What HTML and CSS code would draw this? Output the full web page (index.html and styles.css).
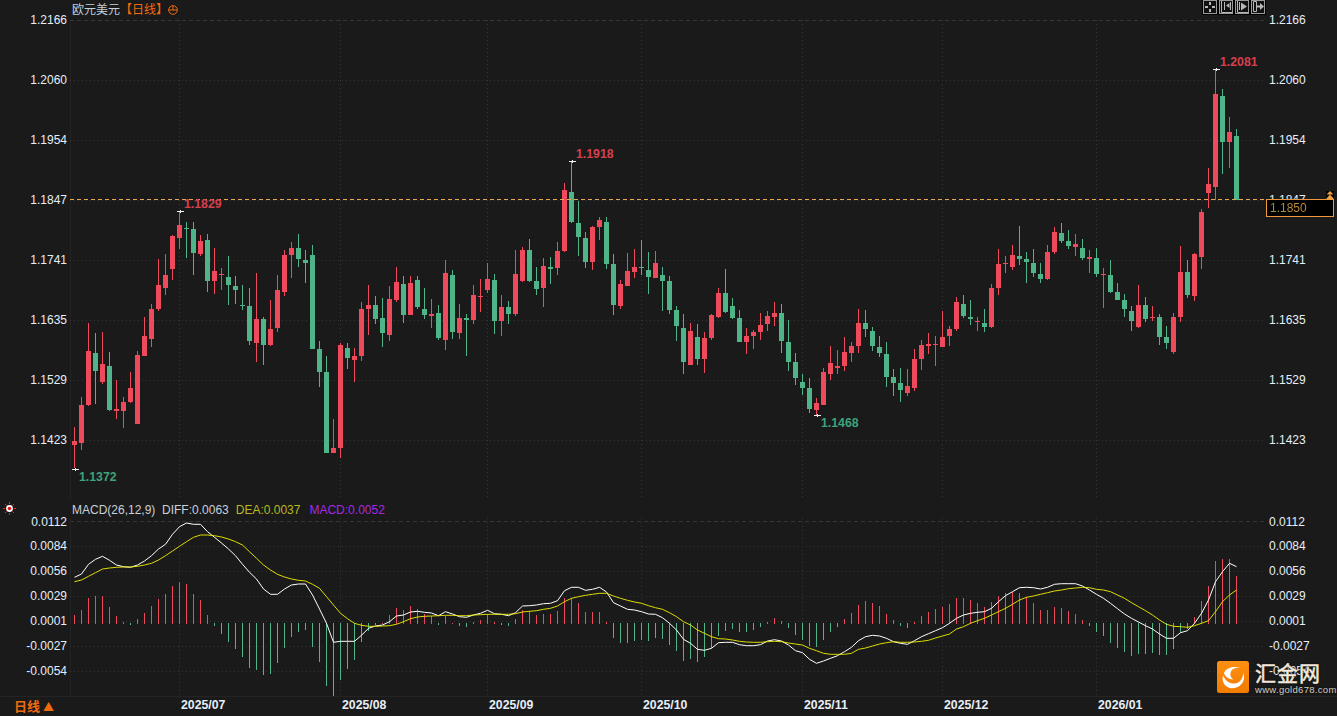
FILE: index.html
```html
<!DOCTYPE html>
<html lang="zh">
<head>
<meta charset="utf-8">
<title>欧元美元 日线</title>
<link rel="stylesheet" href="styles.css">
</head>
<body>
<main class="app">
  <section class="pane pane-price">
    <div class="axis axis-left axis-price">
      <span>1.2166</span><span>1.2060</span><span>1.1954</span><span>1.1847</span><span>1.1741</span><span>1.1635</span><span>1.1529</span><span>1.1423</span>
    </div>
    <div class="plot">
      <div class="title">欧元美元<span class="title-period">【日线】</span><svg class="title-icon" width="10" height="10" viewBox="0 0 10 10"><circle cx="5" cy="5" r="4.300" fill="none" stroke="#f06a10"/><path d="M.5 5h9M5 1v4" stroke="#f06a10" fill="none"/></svg></div>
      <svg id="price-chart" class="chart" width="1197" height="500" viewBox="70 0 1197 500"></svg>
    </div>
    <div class="axis axis-right axis-price">
      <span>1.2166</span><span>1.2060</span><span>1.1954</span><span>1.1847</span><span>1.1741</span><span>1.1635</span><span>1.1529</span><span>1.1423</span>
    </div>
  </section>

  <section class="pane pane-macd">
    <div class="axis axis-left axis-macd">
      <span>0.0112</span><span>0.0084</span><span>0.0056</span><span>0.0029</span><span>0.0001</span><span>-0.0027</span><span>-0.0054</span>
    </div>
    <div class="plot">
      <div class="legend">
        <span class="legend-diff">MACD(26,12,9)&nbsp; DIFF:0.0063</span>
        <span class="legend-dea">DEA:0.0037</span>
        <span class="legend-macd">MACD:0.0052</span>
      </div>
      <svg id="macd-chart" class="chart" width="1197" height="196" viewBox="70 500 1197 196"></svg>
    </div>
    <div class="axis axis-right axis-macd">
      <span>0.0112</span><span>0.0084</span><span>0.0056</span><span>0.0029</span><span>0.0001</span><span>-0.0027</span><span>-0.0054</span>
    </div>
  </section>

  <footer class="timebar">
    <div class="period">日线 <span class="period-arrow">▲</span></div>
    <svg id="time-axis" class="chart" width="1197" height="19" viewBox="70 697 1197 19"></svg>
  </footer>

  <svg class="indicator-dot" width="15" height="15" viewBox="0 0 15 15">
    <path d="M7.5 1v2M7.5 12v2M1 7.5h2M12 7.5h2M3 3l1.4 1.4M10.6 10.6 12 12M3 12l1.4-1.4M10.6 4.4 12 3" stroke="#ff2020" stroke-width="1"/>
    <circle cx="7.5" cy="7.5" r="3.4" fill="#fff"/>
    <circle cx="7.5" cy="7.5" r="1.8" fill="#e01818"/>
  </svg>

  <div class="toolbar">
    <button class="tool"><svg width="12" height="12" viewBox="0 0 12 12"><path d="M5 1h2v3H5zM5 8h2v3H5zM1 5h3v2H1zM8 5h3v2H8z" fill="#b8b8b8"/></svg></button>
    <button class="tool"><svg width="12" height="12" viewBox="0 0 12 12"><path d="M1.500 0v11.500H12M4.500 1v8M10.500 1v8" stroke="#b8b8b8" fill="none"/><path d="M9.500 2v5L6 4.500z" fill="#b8b8b8"/></svg></button>
    <button class="tool"><svg width="12" height="12" viewBox="0 0 12 12"><path d="M1.500 0v11.500H12M3.500 1v8" stroke="#b8b8b8" fill="none"/><path d="M5 1.500v8l6-4z" fill="#b8b8b8"/></svg></button>
    <button class="tool"><svg width="12" height="12" viewBox="0 0 12 12"><path d="M1.500.5h3v10h-3z" stroke="#b8b8b8" fill="none"/><path d="M5 4.500h3V2l4 3.500-4 3.500V6.500H5z" fill="#b8b8b8"/></svg></button>
  </div>

  <div class="price-tag"><span>1.1850</span></div>
  <svg class="price-arrows" width="8" height="8" viewBox="0 0 8 8"><path d="M4 0l3.500 3.500H.5zM4 3.500 8 8H0z" fill="#f0a040"/></svg>

  <div class="brand">
    <svg class="brand-mark" width="32" height="32" viewBox="0 0 32 32">
      <defs><linearGradient id="brand-fill" x1="0" y1="0" x2="0" y2="1"><stop offset="0" stop-color="#ff8f12"/><stop offset="1" stop-color="#f07c00"/></linearGradient></defs>
      <rect width="32" height="32" rx="2.500" fill="url(#brand-fill)"/>
      <path d="M6 14.500c-1.500 5 1 11 7 12.500 6.500 1.500 13-3 14-9.500.3-2-.2-4-.9-5.500.3 5-3.500 11-9.500 10.500C11 22 8 19 6 14.500z" fill="#fff"/>
      <path d="M7 12C9 7.500 15 4.500 24 7c-5-.6-8.500.5-10 3.500-1.500 3.300 0 6.500 2.500 8-5 0-8.500-3-9.500-6.500z" fill="#fff"/>
    </svg>
    <div class="brand-text">
      <span class="brand-name">汇金网</span>
      <span class="brand-url">www.gold678.com</span>
    </div>
  </div>
</main>
<script src="script.js"></script>
</body>
</html>
```
FILE: styles.css
```css
* {
  box-sizing: border-box;
}

html,
body {
  margin: 0;
  background: #1a1a1a;
}

.app {
  position: relative;
  width: 1337px;
  height: 716px;
  overflow: hidden;
  display: flex;
  flex-direction: column;
  background: #1a1a1a;
  color: #e6eef8;
  font-family: "Liberation Sans", Arial, sans-serif;
  font-size: 12px;
}

.pane {
  display: grid;
  grid-template-columns: 70px 1197px 70px;
}

.pane-price {
  height: 500px;
}

.pane-macd {
  height: 196px;
}

.plot {
  position: relative;
}

.chart {
  display: block;
}

.axis {
  display: flex;
  flex-direction: column;
  line-height: 15px;
  font-size: 12px;
  white-space: nowrap;
}

.axis-left {
  align-items: flex-end;
  padding-right: 3px;
}

.axis-right {
  align-items: flex-start;
  padding-left: 2px;
}

.axis-price {
  gap: 45px;
  padding-top: 13px;
}

.axis-macd {
  gap: 10px;
  padding-top: 14px;
}

.axis-macd span:first-child {
  margin-top: 1px;
  margin-bottom: -1px;
}

.title {
  position: absolute;
  left: 2px;
  top: 1px;
  display: flex;
  align-items: center;
  height: 15px;
  color: #c4d0dc;
  font-family: "Noto Sans CJK SC", "Liberation Sans", sans-serif;
  font-size: 12px;
  line-height: 15px;
}

.title-period {
  color: #f06a10;
}

.title-icon {
  margin-left: 0;
  margin-top: 2px;
}

.legend {
  position: absolute;
  left: 2px;
  top: 3px;
  display: flex;
  gap: 7px;
  line-height: 15px;
  white-space: nowrap;
}

.legend-diff {
  color: #c8d0da;
}

.legend-dea {
  color: #b8b820;
}

.legend-macd {
  margin-left: 2px;
  color: #a828e0;
}

.timebar {
  display: flex;
  height: 20px;
  border-top: 1px solid #242424;
}

.period {
  width: 70px;
  padding-left: 14px;
  color: #f06a10;
  font-family: "Noto Sans CJK SC", "Liberation Sans", sans-serif;
  font-size: 13px;
  font-weight: 700;
  line-height: 18px;
  white-space: nowrap;
}

.period-arrow {
  font-size: 11px;
}

.indicator-dot {
  position: absolute;
  left: 2px;
  top: 501px;
}

.toolbar {
  position: absolute;
  left: 1202px;
  top: -1px;
  display: flex;
  gap: 2px;
  padding: 1px;
  background: #000;
}

.tool {
  display: flex;
  align-items: center;
  justify-content: center;
  width: 14px;
  height: 14px;
  padding: 0;
  border: 1px solid #9a9a9a;
  background: #111;
}

.tool svg {
  display: block;
}

.price-tag {
  position: absolute;
  left: 1266px;
  top: 199px;
  width: 68px;
  height: 18px;
  padding-left: 3px;
  border: 1px solid #f0963c;
  background: #000;
  line-height: 17px;
}

.price-tag span {
  background: linear-gradient(90deg, #8d9440, #d88a30);
  -webkit-background-clip: text;
  background-clip: text;
  color: transparent;
}

.price-arrows {
  position: absolute;
  left: 1326px;
  top: 191px;
  background: #000;
}

.brand {
  position: absolute;
  left: 1217px;
  top: 661px;
  display: flex;
  gap: 6px;
}

.brand-mark {
  display: block;
}

.brand-text {
  display: flex;
  flex-direction: column;
  width: 66px;
  color: #f4e8dc;
  text-shadow: 0 0 2px #111, 0 0 2px #111;
}

.brand-name {
  font-family: "Noto Sans CJK SC", "Liberation Sans", sans-serif;
  font-size: 21px;
  font-weight: 400;
  -webkit-text-stroke: .5px #f4e8dc;
  letter-spacing: 1px;
  line-height: 23px;
}

.brand-url {
  font-size: 9.500px;
  letter-spacing: .3px;
  line-height: 9px;
  margin-top: 1px;
  white-space: nowrap;
  color: #d8ccc0;
}
```
FILE: script.js
```js
const NS = "http://www.w3.org/2000/svg";
const RED = "#ee4a5b";
const GREEN = "#4fb588";

function el(parent, name, attrs, text) {
  const node = document.createElementNS(NS, name);
  for (const key in attrs) node.setAttribute(key, attrs[key]);
  if (text) node.textContent = text;
  parent.appendChild(node);
  return node;
}

/* [colour, high, body top, body bottom, low] sampled per block, y = oy + v / 3 */
const candleBlocks = [
  { oy: 200, rows: [
    ["r",681,723,735,805],["r",591,615,729,750],["r",370,453,615,618],["g",400,459,513,612],["r",396,492,546,552],
    ["g",456,498,630,633],["r",540,627,633,657],["r",591,606,633,684],["r",516,564,606,609],["r",453,465,672,672],
    ["r",351,408,468,468],["r",312,327,417,441],["r",177,255,327,333],["r",162,225,264,285],["r",105,108,207,240],
    ["r",33,75,114,147],["g",66,84,88,174],["g",66,87,159,225],["r",105,123,162,168],["g",102,120,243,276],
    ["r",144,213,243,282],["r",204,222,226,270],["g",168,231,255,315],["g",228,258,270,312],["g",255,314,318,330],
    ["g",264,318,423,435],["r",219,357,429,486],["g",351,357,435,495],["r",300,387,435,438],["r",225,270,384,396],
    ["r",150,165,276,288],["r",126,144,165,234],["g",102,144,177,201],["g",150,180,189,249],["g",135,165,447,447],
    ["g",423,447,516,561],["g",468,516,759,759],["r",657,744,759,759],["r",429,435,744,774],["g",429,444,474,507],
    ["r",444,468,480,546]
  ]},
  { oy: 150, rows: [
    ["r",456,477,618,633],["r",405,465,477,555],["g",438,465,507,522],["g",444,504,549,591],["r",408,447,555,573],
    ["r",351,396,450,456],["g",378,402,495,519],["r",378,399,495,495],["g",378,390,471,477],["g",414,477,495,507],
    ["r",447,492,498,534],["g",465,489,564,570],["r",330,369,570,600],["g",360,375,546,567],["r",462,504,549,567],
    ["g",492,504,510,618],["r",405,435,510,522],["r",387,438,441,486],["r",339,387,420,429],["g",372,390,513,552],
    ["r",435,471,513,558],["g",453,471,492,522],["r",300,372,492,498],["r",291,300,393,396],["g",267,300,393,396],
    ["g",351,393,417,435],["r",324,348,414,471],["g",321,351,357,402],["r",276,303,354,375],["r",99,120,303,306],
    ["g",33,126,216,219],["g",153,219,261,318],["g",246,264,336,354],["r",228,231,336,360],["r",201,210,231,270],
    ["g",201,216,342,357],["g",312,342,465,495],["r",390,402,468,477],["r",309,363,408,408],["r",297,351,366,384],
    ["g",270,351,354,375],["g",306,360,381,432],["r",303,339,384,384]
  ]},
  { oy: 220, rows: [
    ["g",141,165,183,273],["g",168,183,270,282],["g",258,270,318,363],["g",282,324,426,462],["r",309,333,435,435],
    ["g",312,351,417,435],["r",336,354,417,459],["r",282,285,354,360],["r",204,219,291,294],["g",147,219,276,279],
    ["g",234,258,294,297],["g",270,294,366,366],["r",324,348,366,402],["r",330,336,348,387],["r",279,315,336,360],
    ["r",273,288,312,333],["r",246,279,291,318],["g",252,279,363,399],["g",300,366,426,453],["g",399,426,474,495],
    ["g",462,486,504,525],["g",474,504,567,579],["r",534,549,570,585],["r",444,456,555,555],["r",378,429,462,480],
    ["r",390,438,444,462],["r",351,396,438,453],["r",366,378,399,426],["r",267,309,378,399],["g",270,309,327,351],
    ["g",321,333,378,393],["g",348,381,399,411],["g",366,402,471,501],["g",447,471,489,528],["g",444,489,510,546],
    ["r",447,498,519,528],["r",387,417,504,513]
  ]},
  { oy: 190, rows: [
    ["r",450,465,507,540],["r",429,462,468,492],["r",438,462,465,528],["r",363,441,471,471],["r",408,417,438,468],
    ["r",321,336,417,423],["g",315,342,378,384],["g",330,381,387,405],["r",381,393,396,423],["g",357,399,411,426],
    ["r",282,294,411,414],["r",177,222,294,315],["r",198,219,222,249],["r",165,195,231,240],["g",108,198,207,225],
    ["g",186,207,216,279],["g",177,219,249,261],["g",219,252,267,279],["r",165,186,267,270],["r",111,126,186,192],
    ["g",99,129,153,159],["g",120,153,168,177],["r",132,162,171,198],["g",147,174,204,210],["r",180,201,207,249],
    ["g",174,204,252,261],["r",234,252,255,354],["g",210,255,306,309],["g",279,306,330,330],["g",312,330,357,381],
    ["g",348,363,393,423],["r",285,345,411,414],["g",321,345,387,396],["r",348,381,384,393],["g",372,381,441,465],
    ["g",408,441,459,477],["r",369,381,486,492]
  ]},
  { oy: 200, rows: [
    ["r",138,216,351,366],["g",180,216,285,294],["r",159,162,288,303],["r",27,36,171,207]
  ]},
  { oy: 0, rows: [
    ["r",504,552,579,624],["r",207,282,561,600],["g",267,288,426,522],["r",351,396,426,504],["g",387,408,600,600]
  ]}
];

const macdBlocks = [
  { oy: 515, base: 327,
    hist: [300,285,249,243,243,276,303,321,330,312,294,273,252,237,213,201,207,237,255,300,333,357,381,402,426,459,465,480,477,444,399,366,351,345,396,441,513,543,495,462,435,381,348,330,324,300,279],
    diff: [187,177,148,133,124,136,150,155,157,150,138,122,102,88,58,35,24,28,28,50,67,84,102,122,148,172,192,222,238,238,222,210,207,207,240,282,325,382,379,379,379,361,340,333,330,320,303],
    dea: [200,195,184,173,162,159,157,156,156,154,150,145,135,122,108,94,80,67,60,60,62,66,72,80,90,110,130,150,165,178,186,192,196,198,208,220,245,270,295,311,325,331,334,334,333,332,328] },
  { oy: 570, base: 162,
    hist: [120,108,117,132,138,165,138,159,168,171,156,150,132,156,165,168,147,120,123,135,132,132,123,84,84,99,126,126,126,156,204,219,219,213,210,213,204,207,225,243,273,267,276,261,234,198,183,177,186,186,180,171,156,144,153,174,195],
    diff: [135,126,124,127,129,137,125,132,140,142,135,130,121,131,133,137,128,108,107,105,101,100,92,62,52,52,61,58,52,66,98,108,118,120,125,132,133,143,160,180,208,220,238,241,235,218,217,217,224,227,227,224,213,209,213,225,242],
    dea: [155,146,141,139,138,137,136,136,137,137,135,134,133,133,133,133,131,126,124,122,118,115,108,95,85,80,76,73,70,70,78,85,91,96,100,107,113,118,128,140,155,165,180,190,200,206,207,210,214,216,217,217,215,214,215,219,222] },
  { oy: 560, base: 192,
    hist: [240,258,261,240,216,201,177,159,135,123,129,138,162,180,198,204,186,168,156,147,141,132,114,114,120,129,141,126,108,99,96,99,111,129,150,150,141,144,153,162,180,198,216,228,249,264,276,288,282,282,279,285,285,267,219,207,171,123,78,3,-3,-3,48],
    diff: [278,298,310,303,295,287,275,262,242,230,226,228,235,245,250,253,242,230,221,212,203,190,175,165,160,157,155,145,125,107,95,83,82,83,87,82,73,71,71,71,78,90,103,115,130,146,162,175,186,197,207,222,235,235,218,212,190,160,120,65,35,10,20],
    dea: [255,265,272,280,283,283,283,280,268,264,258,252,248,245,247,247,246,244,241,234,228,222,207,200,190,182,175,165,155,145,133,120,112,108,103,98,93,90,86,84,82,83,88,90,95,105,115,128,140,152,165,180,193,199,200,202,197,190,182,155,125,105,90] }
];

const CANDLE_X = i => 74 + 7 * i;
const GRID_X = [179.5, 340.5, 487.5, 641.5, 802.5, 942.5, 1096.5];
const PLOT_LEFT = 70;
const PLOT_RIGHT = 1266;

function drawGrid(svg, ys, top, bottom) {
  el(svg, "line", { x1: 70.5, x2: 70.5, y1: top, y2: bottom, stroke: "#232323" });
  ys.forEach((y, n) => {
    el(svg, "line", {
      x1: PLOT_LEFT, x2: PLOT_RIGHT, y1: y, y2: y, stroke: "#353535",
      "stroke-dasharray": n === 0 ? "4 3" : "1 3"
    });
  });
  GRID_X.forEach(x => {
    el(svg, "line", { x1: x, x2: x, y1: top, y2: bottom, stroke: "#353535", "stroke-dasharray": "1 3" });
  });
}

function drawCandles(svg) {
  let i = 0;
  candleBlocks.forEach(block => {
    block.rows.forEach(row => {
      const y = v => Math.round(block.oy + v / 3);
      const fill = row[0] === "r" ? RED : GREEN;
      const g = el(svg, "g", { fill, "shape-rendering": "crispEdges" });
      const x = CANDLE_X(i);
      el(g, "rect", { x, y: y(row[1]), width: 1, height: Math.max(1, y(row[4]) - y(row[1])) });
      el(g, "rect", { x: x - 2, y: y(row[2]), width: 5, height: Math.max(1, y(row[3]) - y(row[2])) });
      i++;
    });
  });
}

function drawExtreme(svg, i, y, label, lx, ly, color) {
  const x = CANDLE_X(i);
  const g = el(svg, "g", { fill: "#f2f2f2", "shape-rendering": "crispEdges" });
  el(g, "rect", { x: x - 2, y, width: 7, height: 1 });
  el(g, "rect", { x: x + 1, y: y - 1, width: 1, height: 3 });
  el(svg, "text", { x: lx, y: ly, fill: color, "font-family": "Liberation Sans", "font-size": 12.3, "font-weight": 700 }, label);
}

function drawMacd(svg) {
  let i = 0;
  const diff = [];
  const dea = [];
  macdBlocks.forEach(block => {
    block.hist.forEach((v, n) => {
      const base = 624;
      const end = Math.round(block.oy + v / 3);
      const up = v < block.base;
      el(svg, "rect", {
        x: CANDLE_X(i), y: up ? end : base - 1, width: 1,
        height: Math.max(1, up ? base - end : end - base + 1),
        fill: up ? "#e94b5c" : "#4fb588", "shape-rendering": "crispEdges"
      });
      diff.push((CANDLE_X(i) + 0.5) + "," + (block.oy + block.diff[n] / 3).toFixed(1));
      dea.push((CANDLE_X(i) + 0.5) + "," + (block.oy + block.dea[n] / 3).toFixed(1));
      i++;
    });
  });
  el(svg, "polyline", { points: diff.join(" "), fill: "none", stroke: "#ffffff", "stroke-width": 1 });
  el(svg, "polyline", { points: dea.join(" "), fill: "none", stroke: "#f2f200", "stroke-width": 0.9 });
}

const priceSvg = document.getElementById("price-chart");
drawGrid(priceSvg, [20.5, 80.5, 140.5, 200.5, 260.5, 320.5, 380.5, 440.5], 20, 500);
drawCandles(priceSvg);
el(priceSvg, "line", { x1: 70, x2: 1267, y1: 199.5, y2: 199.5, stroke: "#e8a850", "stroke-dasharray": "4 3" });
drawExtreme(priceSvg, 0, 469, "1.1372", 79, 481, "#3ea27c");
drawExtreme(priceSvg, 15, 211, "1.1829", 184, 208, "#d4404f");
drawExtreme(priceSvg, 71, 161, "1.1918", 576, 158, "#d4404f");
drawExtreme(priceSvg, 106, 415, "1.1468", 821, 427, "#3ea27c");
drawExtreme(priceSvg, 163, 69, "1.2081", 1220, 66, "#d4404f");

const macdSvg = document.getElementById("macd-chart");
drawGrid(macdSvg, [521.5, 546.5, 571.5, 596.5, 621.5, 646.5, 671.5], 518, 696);
drawMacd(macdSvg);

const timeSvg = document.getElementById("time-axis");
[["2025/07", 181], ["2025/08", 342], ["2025/09", 489], ["2025/10", 643], ["2025/11", 804], ["2025/12", 944], ["2026/01", 1098]].forEach(([label, x]) => {
  el(timeSvg, "text", { x, y: 709, fill: "#e6eef8", "font-family": "Liberation Sans", "font-size": 12.3, "font-weight": 700 }, label);
});
```
